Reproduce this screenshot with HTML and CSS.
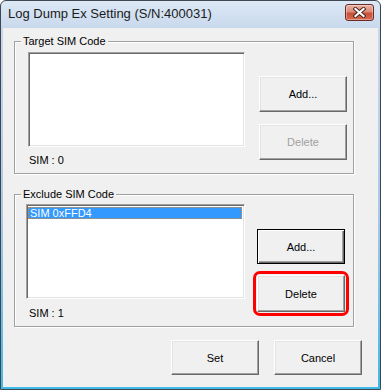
FILE: index.html
```html
<!DOCTYPE html>
<html lang="en">
<head>
<meta charset="UTF-8">
<meta name="viewport" content="width=device-width, initial-scale=1.0">
<title>Log Dump Ex Setting</title>
<link rel="stylesheet" href="styles.css">
</head>
<body>

<div class="window">
    <div class="titlebar">
        <span class="title">Log Dump Ex Setting (S/N:400031)</span>
        <button class="close-btn" aria-label="Close">
            <svg width="13" height="11" viewBox="0 0 13 11">
                <path d="M2.5 2 L10.5 9 M10.5 2 L2.5 9" stroke="#4a2019" stroke-width="4" stroke-linecap="square" fill="none"/>
                <path d="M2.5 2 L10.5 9 M10.5 2 L2.5 9" stroke="#ffffff" stroke-width="2.2" stroke-linecap="square" fill="none"/>
            </svg>
        </button>
    </div>

    <div class="client">
        <!-- Target SIM codes -->
        <div class="group group-target">
            <span class="group-title">Target SIM Code</span>
            <div class="group-body">
                <div class="list-col">
                    <div class="listbox"></div>
                    <div class="count">SIM : 0</div>
                </div>
                <div class="btn-col">
                    <button class="btn">Add...</button>
                    <button class="btn" disabled>Delete</button>
                </div>
            </div>
        </div>

        <!-- Exclude SIM codes -->
        <div class="group group-exclude">
            <span class="group-title">Exclude SIM Code</span>
            <div class="group-body">
                <div class="list-col">
                    <div class="listbox">
                        <div class="list-item selected">SIM 0xFFD4</div>
                    </div>
                    <div class="count">SIM : 1</div>
                </div>
                <div class="btn-col">
                    <button class="btn btn-default">Add...</button>
                    <span class="highlight">
                        <button class="btn">Delete</button>
                    </span>
                </div>
            </div>
        </div>

        <div class="footer">
            <button class="btn">Set</button>
            <button class="btn">Cancel</button>
        </div>
    </div>
</div>

</body>
</html>
```

FILE: styles.css
```css
* {
    box-sizing: border-box;
}

body {
    margin: 0;
    padding: 0;
    font-family: "Liberation Sans", Arial, sans-serif;
    font-size: 11px;
    color: #000;
}

.window {
    width: 381px;
    height: 390px;
    border: 1px solid #3e4650;
    border-radius: 6px 6px 0 0;
    background: linear-gradient(180deg, #dce8f5 0, #c8d8ec 28px, #aac8e8 55%, #3fb9e8 100%);
    display: flex;
    flex-direction: column;
    overflow: hidden;
}

.titlebar {
    flex: none;
    height: 27px;
    display: flex;
    justify-content: space-between;
    align-items: flex-start;
    padding: 0 6px 0 7px;
}

.title {
    font-size: 13px;
    line-height: 26px;
    color: #1b1b1b;
}

.close-btn {
    margin-top: 3px;
    width: 29px;
    height: 17px;
    padding: 0;
    border: 1px solid #6b2b24;
    border-radius: 3px;
    background: linear-gradient(180deg, #eab2a5 0, #dc8a77 45%, #c8503a 55%, #d66a4f 100%);
    box-shadow: inset 0 0 0 1px rgba(255, 255, 255, 0.35);
    display: flex;
    align-items: center;
    justify-content: center;
}

.client {
    flex: 1;
    margin: 0 2px 2px;
    background: #f0f0f0;
    display: flex;
    flex-direction: column;
}

/* group boxes */
.group {
    margin: 13px 0 0 11px;
    width: 340px;
    border: 1px solid #a0a0a0;
    box-shadow: inset 1px 1px #fff, 1px 1px #fff;
    display: flex;
    flex-direction: column;
}

.group-exclude {
    margin-top: 20px;
}

.group-title {
    align-self: flex-start;
    margin: -8px 0 0 6px;
    padding: 0 2px;
    line-height: 14px;
    background: #f0f0f0;
}

.group-body {
    display: flex;
    gap: 14px;
    padding: 4px 0 6px 13px;
}

.group-exclude .group-body {
    gap: 12px;
    padding: 3px 0 6px 11px;
}

.listbox {
    width: 217px;
    height: 95px;
    padding: 2px 2px 2px 1px;
    background: #fff;
    border: 1px solid;
    border-color: #a0a0a0 #fff #fff #a0a0a0;
    box-shadow: inset 1px 1px #696969, inset -1px -1px #e3e3e3;
}

.group-exclude .listbox {
    width: 219px;
}

.list-item {
    height: 12px;
    line-height: 12px;
    padding-left: 2px;
    white-space: nowrap;
}

.list-item.selected {
    background: #3399ff;
    color: #fff;
    outline: 1px dotted #d98a2e;
    outline-offset: -1px;
}

.count {
    margin-top: 6px;
    line-height: 14px;
    padding-left: 1px;
}

.group-exclude .count {
    margin-top: 7px;
    padding-left: 3px;
}

.btn-col {
    display: flex;
    flex-direction: column;
    align-items: flex-start;
    gap: 12px;
    padding-top: 24px;
}

.group-exclude .btn-col {
    gap: 7px;
    padding-top: 25px;
}

/* classic 3d buttons */
.btn {
    width: 88px;
    height: 36px;
    padding: 0;
    font: inherit;
    color: #000;
    background: #f0f0f0;
    border: 1px solid;
    border-color: #fff #696969 #696969 #fff;
    box-shadow: inset -1px -1px #a0a0a0, inset 1px 1px #e3e3e3;
}

.btn:disabled {
    color: #a0a0a0;
}

.btn-default {
    height: 35px;
    border-color: #000;
    box-shadow: inset 1px 1px #fff, inset -1px -1px #696969, inset -2px -2px #a0a0a0;
}

.highlight {
    display: flex;
    margin-left: -4px;
    padding: 1px;
    border: 3px solid #ff0000;
    border-radius: 7px;
}

.highlight .btn {
    height: 37px;
}

.footer {
    display: flex;
    justify-content: flex-end;
    gap: 15px;
    margin-top: 13px;
    padding-right: 16px;
}

.footer .btn {
    height: 35px;
}
```
